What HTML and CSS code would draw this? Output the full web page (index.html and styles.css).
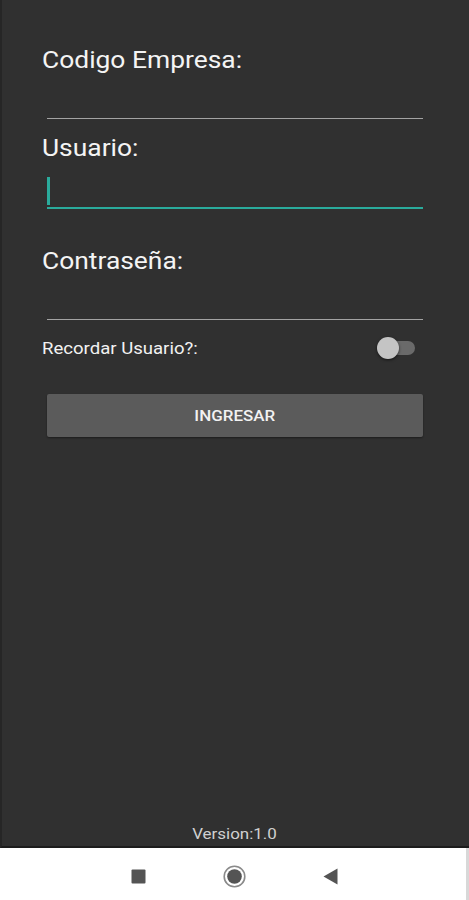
FILE: index.html
```html
<!DOCTYPE html>
<html lang="es">
<head>
<meta charset="utf-8">
<title>Login</title>
<link rel="stylesheet" href="styles.css">
</head>
<body>
<div class="screen">
  <div class="form">
    <div class="label"><span class="wide">Codigo Empresa:</span></div>
    <div class="input input-first"></div>
    <div class="label label-gap-sm"><span class="wide">Usuario:</span></div>
    <div class="input input-focused"><span class="cursor"></span></div>
    <div class="label label-gap-lg"><span class="wide">Contraseña:</span></div>
    <div class="input input-last"></div>
    <div class="remember">
      <span class="remember-text">Recordar Usuario?:</span>
      <span class="switch"><span class="track"></span><span class="thumb"></span></span>
    </div>
    <div class="button"><span class="wide-center">INGRESAR</span></div>
  </div>
  <div class="version"><span class="wide-center">Version:1.0</span></div>
</div>
<div class="navbar">
  <svg class="nav-icon" width="15" height="15" viewBox="0 0 15 15"><rect x="0.5" y="0.5" width="14" height="14" rx="1" fill="#545454"/></svg>
  <svg class="nav-icon" width="23" height="23" viewBox="0 0 23 23"><circle cx="11.5" cy="11.5" r="10.3" fill="none" stroke="#8a8a8a" stroke-width="1.6"/><circle cx="11.5" cy="11.5" r="7.3" fill="#545454"/></svg>
  <svg class="nav-icon" width="15" height="17" viewBox="0 0 15 17"><polygon points="14.5,0.5 14.5,16.5 0.5,8.5" fill="#545454"/></svg>
</div>
</body>
</html>
```
FILE: styles.css
```css
html, body {
  margin: 0;
  padding: 0;
}
body {
  width: 469px;
  height: 900px;
  background: #ffffff;
  font-family: Roboto, "Liberation Sans", Arial, sans-serif;
  overflow: hidden;
}
.wide {
  display: inline-block;
  transform: scaleX(1.1);
  transform-origin: left center;
}
.wide-center {
  display: inline-block;
  transform: scaleX(1.13);
  transform-origin: center center;
}
.screen {
  height: 848px;
  box-sizing: border-box;
  background: #303030;
  border-left: 2px solid #262626;
  border-bottom: 2px solid #1c1c1c;
  display: flex;
  flex-direction: column;
}
.form {
  flex: 1;
  padding: 46px 46px 0 40px;
  display: flex;
  flex-direction: column;
}
.label {
  font-size: 24px;
  line-height: 28px;
  height: 28px;
  color: #f4f4f4;
  white-space: nowrap;
}
.label-gap-sm { margin-top: 15px; }
.label-gap-lg { margin-top: 38px; }
.input {
  margin-left: 5px;
  border-bottom: 1.5px solid #a3a3a3;
}
.input-first { height: 44px; }
.input-last { height: 44px; }
.input-focused {
  box-sizing: border-box;
  height: 47px;
  border-bottom: 2.5px solid #2aab9c;
  padding-top: 15px;
}
.cursor {
  display: block;
  width: 2.5px;
  height: 28px;
  background: #2aab9c;
}
.remember {
  margin-top: 13px;
  height: 30px;
  display: flex;
  align-items: center;
  justify-content: space-between;
  padding-right: 8px;
}
.remember-text {
  display: inline-block;
  font-size: 16px;
  color: #f2f2f2;
  white-space: nowrap;
  transform: scaleX(1.16);
  transform-origin: left center;
}
.switch {
  position: relative;
  width: 38px;
  height: 24px;
  display: flex;
  align-items: center;
  justify-content: flex-end;
}
.track {
  display: block;
  width: 30px;
  height: 14px;
  border-radius: 7px;
  background: #6a6a6a;
}
.thumb {
  position: absolute;
  left: 0;
  top: 1px;
  width: 22px;
  height: 22px;
  border-radius: 50%;
  background: #c4c4c4;
  box-shadow: 0 1px 3px rgba(0, 0, 0, 0.6);
}
.button {
  margin-top: 31px;
  margin-left: 5px;
  height: 43px;
  background: #5b5b5b;
  border-radius: 2px;
  box-shadow: 0 1px 2px rgba(0, 0, 0, 0.4);
  color: #f2f2f2;
  font-size: 15px;
  font-weight: 500;
  display: flex;
  align-items: center;
  justify-content: center;
}
.version {
  text-align: center;
  font-size: 15px;
  line-height: 18px;
  color: #d0d0d0;
  padding-bottom: 3px;
  padding-right: 2px;
}
.navbar {
  height: 52px;
  background: #ffffff;
  border-right: 3px solid #d8d8d8;
  box-sizing: border-box;
  display: flex;
  align-items: center;
  justify-content: center;
  gap: 77px;
  padding-left: 3px;
  padding-top: 5px;
}
.nav-icon {
  display: block;
}
```
